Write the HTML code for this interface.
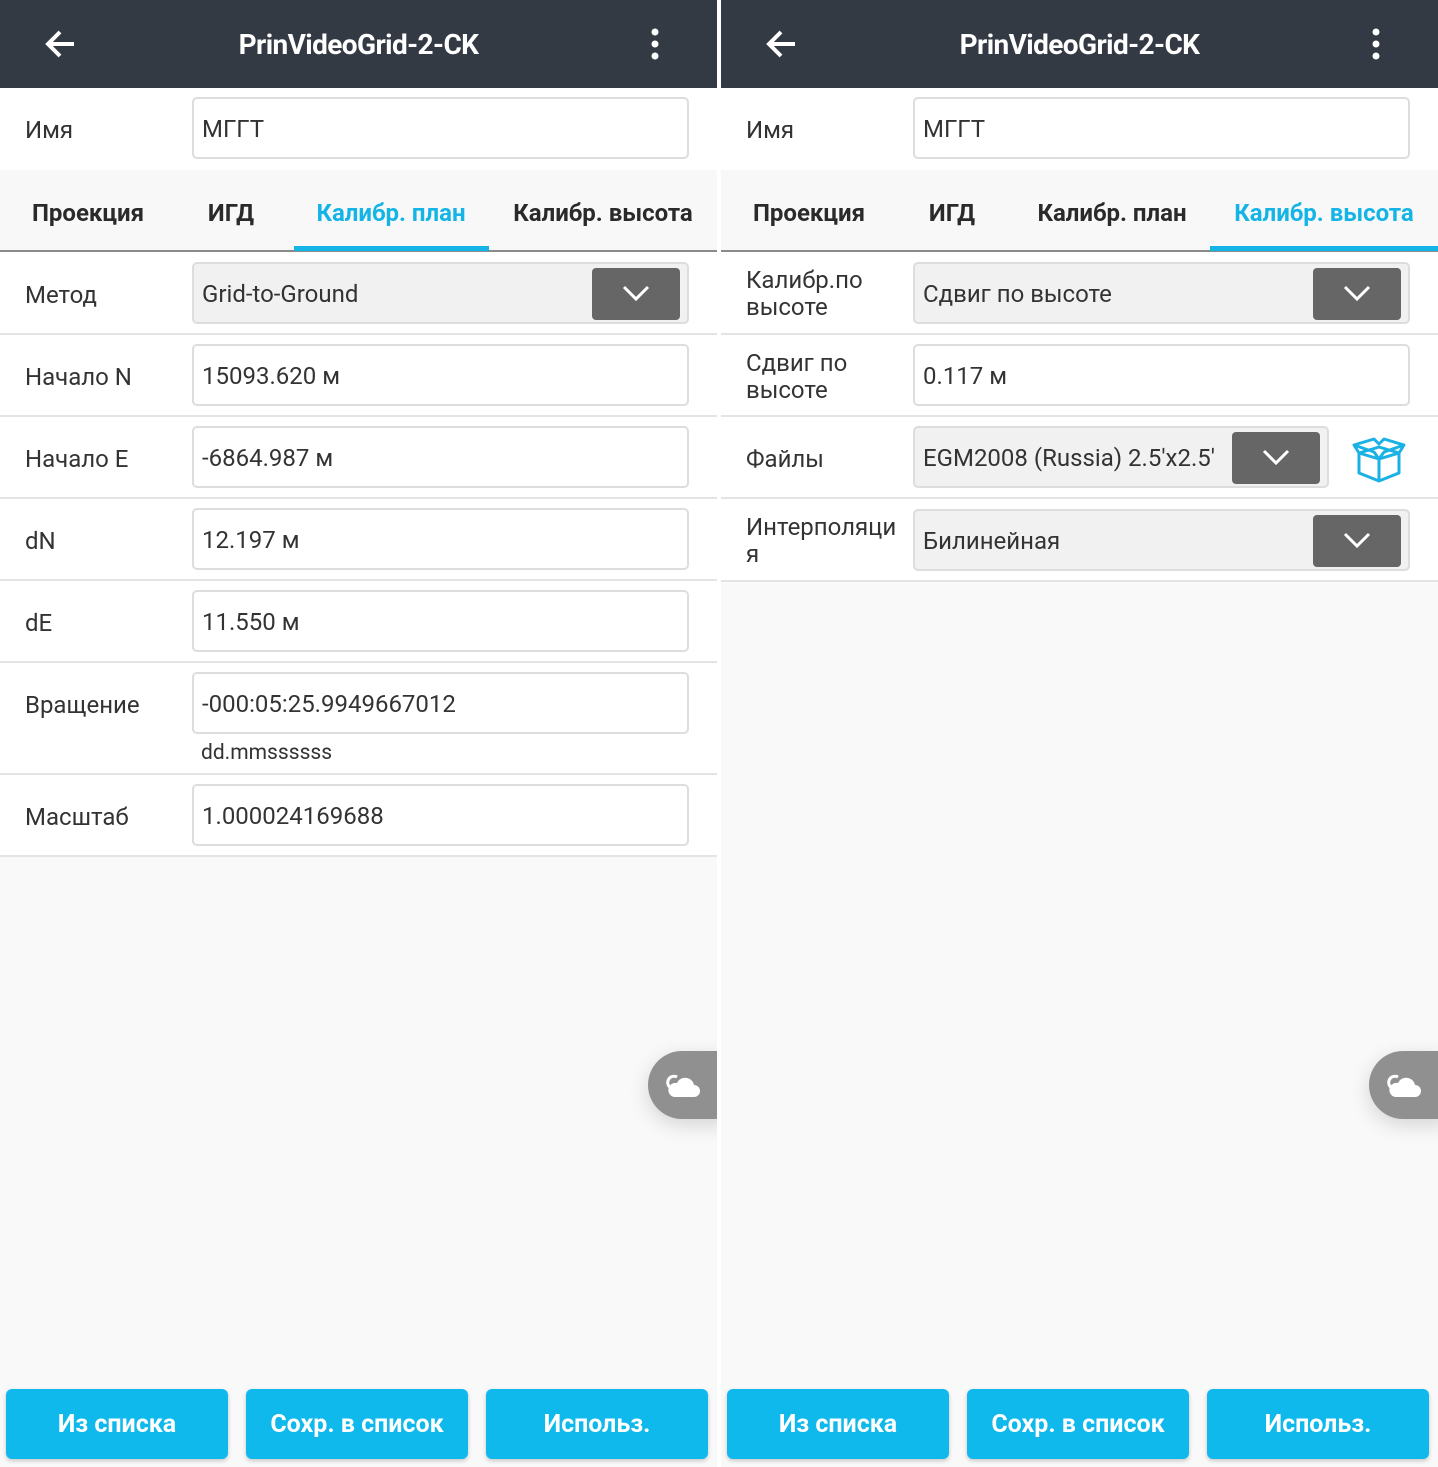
<!DOCTYPE html>
<html><head><meta charset="utf-8"><style>
*{margin:0;padding:0;box-sizing:border-box}
body{width:1438px;height:1467px;background:#fff;position:relative;overflow:hidden;font-family:"Roboto","Liberation Sans","DejaVu Sans",sans-serif;color:#2b2b2b}
.p{position:absolute;top:0;width:717px;height:1467px;background:#f9f9f9;overflow:hidden}
.hd{position:absolute;left:0;top:0;width:100%;height:88px;background:#343a44}
.ttl{position:absolute;left:0;width:100%;top:28px;text-align:center;color:#fff;font-weight:bold;font-size:28px;letter-spacing:-0.6px}
.row{position:absolute;left:0;width:100%;background:#fff;border-bottom:2px solid #e4e4e4}
.lb{position:absolute;left:25px;font-size:24px;color:#333;line-height:27px}
.in{position:absolute;left:192px;width:497px;height:62px;border:2px solid #ddd;border-radius:5px;background:#fff;font-size:24px;padding-left:8px;line-height:61px;color:#333;white-space:nowrap;overflow:hidden}
.in.g{background:#f1f1f1}
.dd{position:absolute;top:4px;right:7px;width:88px;height:52px;background:#666;border-radius:4px}
.dd svg{position:absolute;left:30px;top:16px}
.tabs{position:absolute;left:0;top:170px;width:100%;height:82px;background:#f8f8f8;border-bottom:2px solid #8a8a8a}
.tab{position:absolute;top:29px;font-weight:bold;font-size:24px;color:#2a2a2a;transform:translateX(-50%);white-space:nowrap}
.tab.a{color:#14b4e6}
.ul{position:absolute;top:76px;height:5px;background:#14b4e6}
.btn{position:absolute;top:1389px;width:222px;height:70px;background:#0fb9ec;border-radius:6px;color:#fff;font-weight:bold;font-size:25px;text-align:center;line-height:72px;box-shadow:0 2px 4px rgba(0,0,0,.2)}
.cl{position:absolute;left:648px;top:1051px;width:80px;height:68px;background:#909090;border-radius:34px 0 0 34px;box-shadow:0 6px 20px rgba(0,0,0,.15)}
</style></head><body>

<!-- LEFT -->
<div class="p" style="left:0">
<div class="hd">
<svg style="position:absolute;left:43px;top:28px" width="34" height="32" viewBox="0 0 34 32"><path d="M31 16H5M17 4L5 16l12 12" stroke="#fff" stroke-width="4" fill="none"/></svg>
<div class="ttl">PrinVideoGrid-2-CK</div>
<svg style="position:absolute;left:648px;top:28px" width="14" height="32"><circle cx="7" cy="4" r="3.5" fill="#fff"/><circle cx="7" cy="16" r="3.5" fill="#fff"/><circle cx="7" cy="28" r="3.5" fill="#fff"/></svg>
</div>
<div class="row" style="top:88px;height:82px;border:none"><div class="lb" style="top:29px">Имя</div><div class="in" style="top:9px">МГГТ</div></div>
<div class="tabs">
<div class="tab" style="left:88px">Проекция</div><div class="tab" style="left:231px">ИГД</div><div class="tab a" style="left:391px">Калибр. план</div><div class="tab" style="left:603px">Калибр. высота</div>
<div class="ul" style="left:294px;width:195px"></div>
</div>
<div class="row" style="top:252px;height:83px"><div class="lb" style="top:30px">Метод</div><div class="in g" style="top:10px">Grid-to-Ground<div class="dd"><svg width="28" height="18"><path d="M2 3l12 12L26 3" stroke="#fff" stroke-width="3" fill="none"/></svg></div></div></div>
<div class="row" style="top:335px;height:82px"><div class="lb" style="top:29px">Начало N</div><div class="in" style="top:9px">15093.620 м</div></div>
<div class="row" style="top:417px;height:82px"><div class="lb" style="top:29px">Начало E</div><div class="in" style="top:9px">-6864.987 м</div></div>
<div class="row" style="top:499px;height:82px"><div class="lb" style="top:29px">dN</div><div class="in" style="top:9px">12.197 м</div></div>
<div class="row" style="top:581px;height:82px"><div class="lb" style="top:29px">dE</div><div class="in" style="top:9px">11.550 м</div></div>
<div class="row" style="top:663px;height:112px"><div class="lb" style="top:29px">Вращение</div><div class="in" style="top:9px">-000:05:25.9949667012</div><div style="position:absolute;left:201px;top:78px;font-size:21px;color:#333">dd.mmssssss</div></div>
<div class="row" style="top:775px;height:82px"><div class="lb" style="top:29px">Масштаб</div><div class="in" style="top:9px">1.000024169688</div></div>
<div class="cl"><svg style="position:absolute;left:18px;top:20px" width="34" height="28" viewBox="0 0 34 28"><path d="M8 26h20a6 6 0 0 0 0-12 9 9 0 0 0-17-2 7 7 0 0 0-3 14z" fill="#fff"/><path d="M5 17a6 6 0 0 1 6-11" stroke="#fff" stroke-width="3" fill="none"/></svg></div>
<div class="btn" style="left:6px">Из списка</div><div class="btn" style="left:246px">Сохр. в список</div><div class="btn" style="left:486px">Использ.</div>
</div>

<!-- RIGHT -->
<div class="p" style="left:721px">
<div class="hd">
<svg style="position:absolute;left:43px;top:28px" width="34" height="32" viewBox="0 0 34 32"><path d="M31 16H5M17 4L5 16l12 12" stroke="#fff" stroke-width="4" fill="none"/></svg>
<div class="ttl">PrinVideoGrid-2-CK</div>
<svg style="position:absolute;left:648px;top:28px" width="14" height="32"><circle cx="7" cy="4" r="3.5" fill="#fff"/><circle cx="7" cy="16" r="3.5" fill="#fff"/><circle cx="7" cy="28" r="3.5" fill="#fff"/></svg>
</div>
<div class="row" style="top:88px;height:82px;border:none"><div class="lb" style="top:29px">Имя</div><div class="in" style="top:9px">МГГТ</div></div>
<div class="tabs">
<div class="tab" style="left:88px">Проекция</div><div class="tab" style="left:231px">ИГД</div><div class="tab" style="left:391px">Калибр. план</div><div class="tab a" style="left:603px">Калибр. высота</div>
<div class="ul" style="left:489px;width:228px"></div>
</div>
<div class="row" style="top:252px;height:83px"><div class="lb" style="top:15px">Калибр.по<br>высоте</div><div class="in g" style="top:10px">Сдвиг по высоте<div class="dd"><svg width="28" height="18"><path d="M2 3l12 12L26 3" stroke="#fff" stroke-width="3" fill="none"/></svg></div></div></div>
<div class="row" style="top:335px;height:82px"><div class="lb" style="top:15px">Сдвиг по<br>высоте</div><div class="in" style="top:9px">0.117 м</div></div>
<div class="row" style="top:417px;height:82px"><div class="lb" style="top:29px">Файлы</div><div class="in g" style="top:9px;width:416px">EGM2008 (Russia) 2.5'x2.5'<div class="dd" style="background:#666"><svg width="28" height="18"><path d="M2 3l12 12L26 3" stroke="#fff" stroke-width="3" fill="none"/></svg></div></div>
<svg style="position:absolute;left:631px;top:18px" width="56" height="48" viewBox="0 0 56 48"><g stroke="#1ab2e4" stroke-width="3" fill="none" stroke-linejoin="round"><path d="M7 18v20l20 8 20-8V18"/><path d="M7 18l20 6 20-6"/><path d="M27 24v22"/><path d="M7 18L2 10l20-6 5 5 5-5 20 6-5 8"/><path d="M7 18l20-6 20 6"/><path d="M2 10l20 7 5 7M52 10l-20 7-5 7"/></g></svg>
</div>
<div class="row" style="top:499px;height:83px"><div class="lb" style="top:15px">Интерполяци<br>я</div><div class="in g" style="top:10px">Билинейная<div class="dd"><svg width="28" height="18"><path d="M2 3l12 12L26 3" stroke="#fff" stroke-width="3" fill="none"/></svg></div></div></div>
<div class="cl"><svg style="position:absolute;left:18px;top:20px" width="34" height="28" viewBox="0 0 34 28"><path d="M8 26h20a6 6 0 0 0 0-12 9 9 0 0 0-17-2 7 7 0 0 0-3 14z" fill="#fff"/><path d="M5 17a6 6 0 0 1 6-11" stroke="#fff" stroke-width="3" fill="none"/></svg></div>
<div class="btn" style="left:6px">Из списка</div><div class="btn" style="left:246px">Сохр. в список</div><div class="btn" style="left:486px">Использ.</div>
</div>
</body></html>
